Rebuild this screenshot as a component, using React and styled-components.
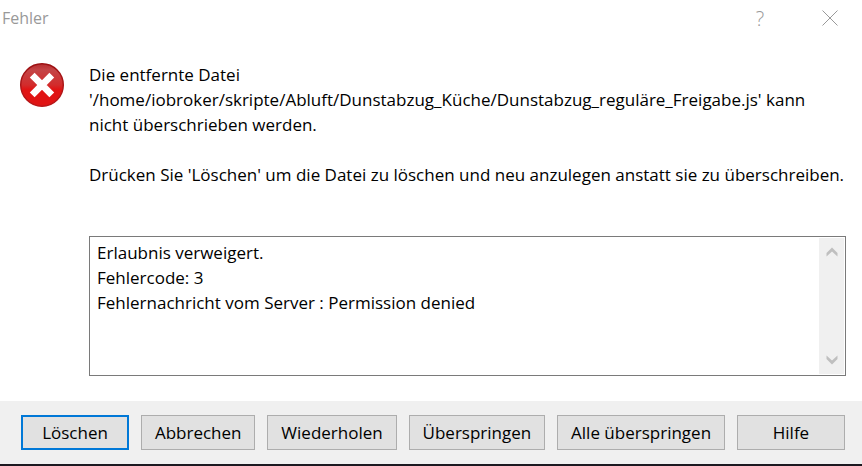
import React, { Component } from 'react';
import styled, { createGlobalStyle, ThemeProvider } from 'styled-components';

const theme = {
  colors: {
    text: '#000000',
    caption: '#999999',
    panel: '#f0f0f0',
    button: '#e1e1e1',
    buttonBorder: '#adadad',
    accent: '#0078d7',
    fieldBorder: '#7a7a7a',
    arrow: '#bfbfbf',
    desktop: '#1c1820',
  },
  font: "'Segoe UI', 'Open Sans', 'Noto Sans', sans-serif",
};

const actions = [
  { id: 'delete', label: 'Löschen' },
  { id: 'cancel', label: 'Abbrechen' },
  { id: 'retry', label: 'Wiederholen' },
  { id: 'skip', label: 'Überspringen' },
  { id: 'skipAll', label: 'Alle überspringen' },
  { id: 'help', label: 'Hilfe' },
];

const message = [
  'Die entfernte Datei',
  "'/home/iobroker/skripte/Abluft/Dunstabzug_Küche/Dunstabzug_reguläre_Freigabe.js' kann",
  'nicht überschrieben werden.',
  '',
  "Drücken Sie 'Löschen' um die Datei zu löschen und neu anzulegen anstatt sie zu überschreiben.",
].join('\n');

const details = [
  'Erlaubnis verweigert.',
  'Fehlercode: 3',
  'Fehlernachricht vom Server : Permission denied',
].join('\n');

// -- Icons
const ErrorIcon = () => (
  <svg width="46" height="46" viewBox="0 0 46 46" aria-hidden="true">
    <defs>
      <linearGradient id="errorFill" x1="0" y1="0" x2="0" y2="1">
        <stop offset="0" stopColor="#b52c2e" />
        <stop offset="0.15" stopColor="#c44446" />
        <stop offset="0.5" stopColor="#d22c2c" />
        <stop offset="0.6" stopColor="#e01414" />
        <stop offset="1" stopColor="#e01414" />
      </linearGradient>
      <linearGradient id="errorRim" x1="0" y1="0" x2="0" y2="1">
        <stop offset="0" stopColor="#9c1012" />
        <stop offset="1" stopColor="#b81618" />
      </linearGradient>
    </defs>
    <circle
      cx="23"
      cy="23"
      r="21.3"
      fill="url(#errorFill)"
      stroke="url(#errorRim)"
      strokeWidth="1.4"
    />
    <path
      d="M13.2 13.2L32.8 32.8M32.8 13.2L13.2 32.8"
      stroke="#ffffff"
      strokeWidth="6.8"
    />
  </svg>
);

const CloseIcon = () => (
  <svg width="16" height="16" viewBox="0 0 16 16" aria-hidden="true">
    <path d="M0.5 0.5L15.5 15.5M15.5 0.5L0.5 15.5" stroke="#999999" fill="none" />
  </svg>
);

const ArrowIcon = () => (
  <svg width="12" height="10" viewBox="0 0 12 10" aria-hidden="true">
    <path d="M0.5 6L6 0.5L11.5 6V9.5L6 4.6L0.5 9.5Z" fill="#bfbfbf" />
  </svg>
);

// -- Component
class App extends Component {
  detailsRef = React.createRef();

  scrollDetails = (lines) => {
    this.detailsRef.current.scrollBy(0, lines * 25);
  };

  render() {
    return (
      <ThemeProvider theme={theme}>
        <GlobalStyle />
        <Dialog role="alertdialog" aria-labelledby="title" aria-describedby="message">
          <TitleBar>
            <Title id="title">Fehler</Title>
            <CaptionButton type="button">?</CaptionButton>
            <CaptionButton type="button" aria-label="Schließen">
              <CloseIcon />
            </CaptionButton>
          </TitleBar>
          <Content>
            <ErrorIcon />
            <Main>
              <Message id="message">{message}</Message>
              <DetailsField>
                <Details
                  ref={this.detailsRef}
                  aria-label="Details"
                  readOnly
                  value={details}
                />
                <ScrollBar>
                  <ScrollButton
                    type="button"
                    aria-label="Nach oben"
                    onClick={() => this.scrollDetails(-1)}
                  >
                    <ArrowIcon />
                  </ScrollButton>
                  <ScrollButton
                    type="button"
                    aria-label="Nach unten"
                    $down
                    onClick={() => this.scrollDetails(1)}
                  >
                    <ArrowIcon />
                  </ScrollButton>
                </ScrollBar>
              </DetailsField>
            </Main>
          </Content>
          <Footer>
            {actions.map((action) => (
              <ActionButton
                key={action.id}
                type="button"
                $primary={action.id === 'delete'}
              >
                {action.label}
              </ActionButton>
            ))}
          </Footer>
        </Dialog>
      </ThemeProvider>
    );
  }
}

// -- Styles
const GlobalStyle = createGlobalStyle`
  * {
    box-sizing: border-box;
  }

  body {
    margin: 0;
    background: #ffffff;
    color: ${({ theme }) => theme.colors.text};
    font: 17px/25px ${({ theme }) => theme.font};
  }

  button,
  textarea {
    margin: 0;
    color: inherit;
    font: inherit;
  }

  svg {
    display: block;
    flex: none;
  }
`;

const Dialog = styled.div`
  border-bottom: 2px solid ${({ theme }) => theme.colors.desktop};
`;

const TitleBar = styled.header`
  display: flex;
  align-items: center;
  height: 36px;
  padding-left: 2px;
`;

const Title = styled.h1`
  flex: 1;
  margin: 0;
  color: ${({ theme }) => theme.colors.caption};
  font-size: 16px;
  font-weight: 400;
`;

const CaptionButton = styled.button`
  display: flex;
  align-items: center;
  justify-content: center;
  width: 76px;
  height: 36px;
  padding: 0;
  border: none;
  background: none;
  color: ${({ theme }) => theme.colors.caption};
  font-size: 20px;
  font-weight: 300;

  &:last-child {
    width: 64px;
  }
`;

const Content = styled.div`
  display: flex;
  gap: 24px;
  padding: 26px 16px 25px 19px;
`;

const Main = styled.div`
  flex: 1;
  min-width: 0;
`;

const Message = styled.p`
  margin: 0 0 49px;
  white-space: pre-wrap;
`;

const DetailsField = styled.div`
  display: flex;
  height: 140px;
  padding: 1px;
  border: 1px solid ${({ theme }) => theme.colors.fieldBorder};
`;

const Details = styled.textarea`
  flex: 1;
  min-width: 0;
  padding: 2px 6px;
  border: none;
  outline: none;
  background: none;
  overflow: hidden;
  resize: none;
`;

const ScrollBar = styled.div`
  display: flex;
  flex-direction: column;
  justify-content: space-between;
  width: 25px;
  background: ${({ theme }) => theme.colors.panel};
`;

const ScrollButton = styled.button`
  display: flex;
  align-items: center;
  justify-content: center;
  height: 28px;
  padding: 0;
  border: none;
  background: none;

  svg {
    transform: ${({ $down }) => ($down ? 'rotate(180deg)' : 'none')};
  }
`;

const Footer = styled.footer`
  display: flex;
  gap: 12px;
  padding: 14px 17px 14px 21px;
  background: ${({ theme }) => theme.colors.panel};
`;

const ActionButton = styled.button`
  flex: 1 0 auto;
  min-width: 108px;
  height: 35px;
  padding: 0 12px;
  border: ${({ $primary, theme }) =>
    $primary
      ? `2px solid ${theme.colors.accent}`
      : `1px solid ${theme.colors.buttonBorder}`};
  background: ${({ theme }) => theme.colors.button};
  white-space: nowrap;
`;

// -----
export default App;
